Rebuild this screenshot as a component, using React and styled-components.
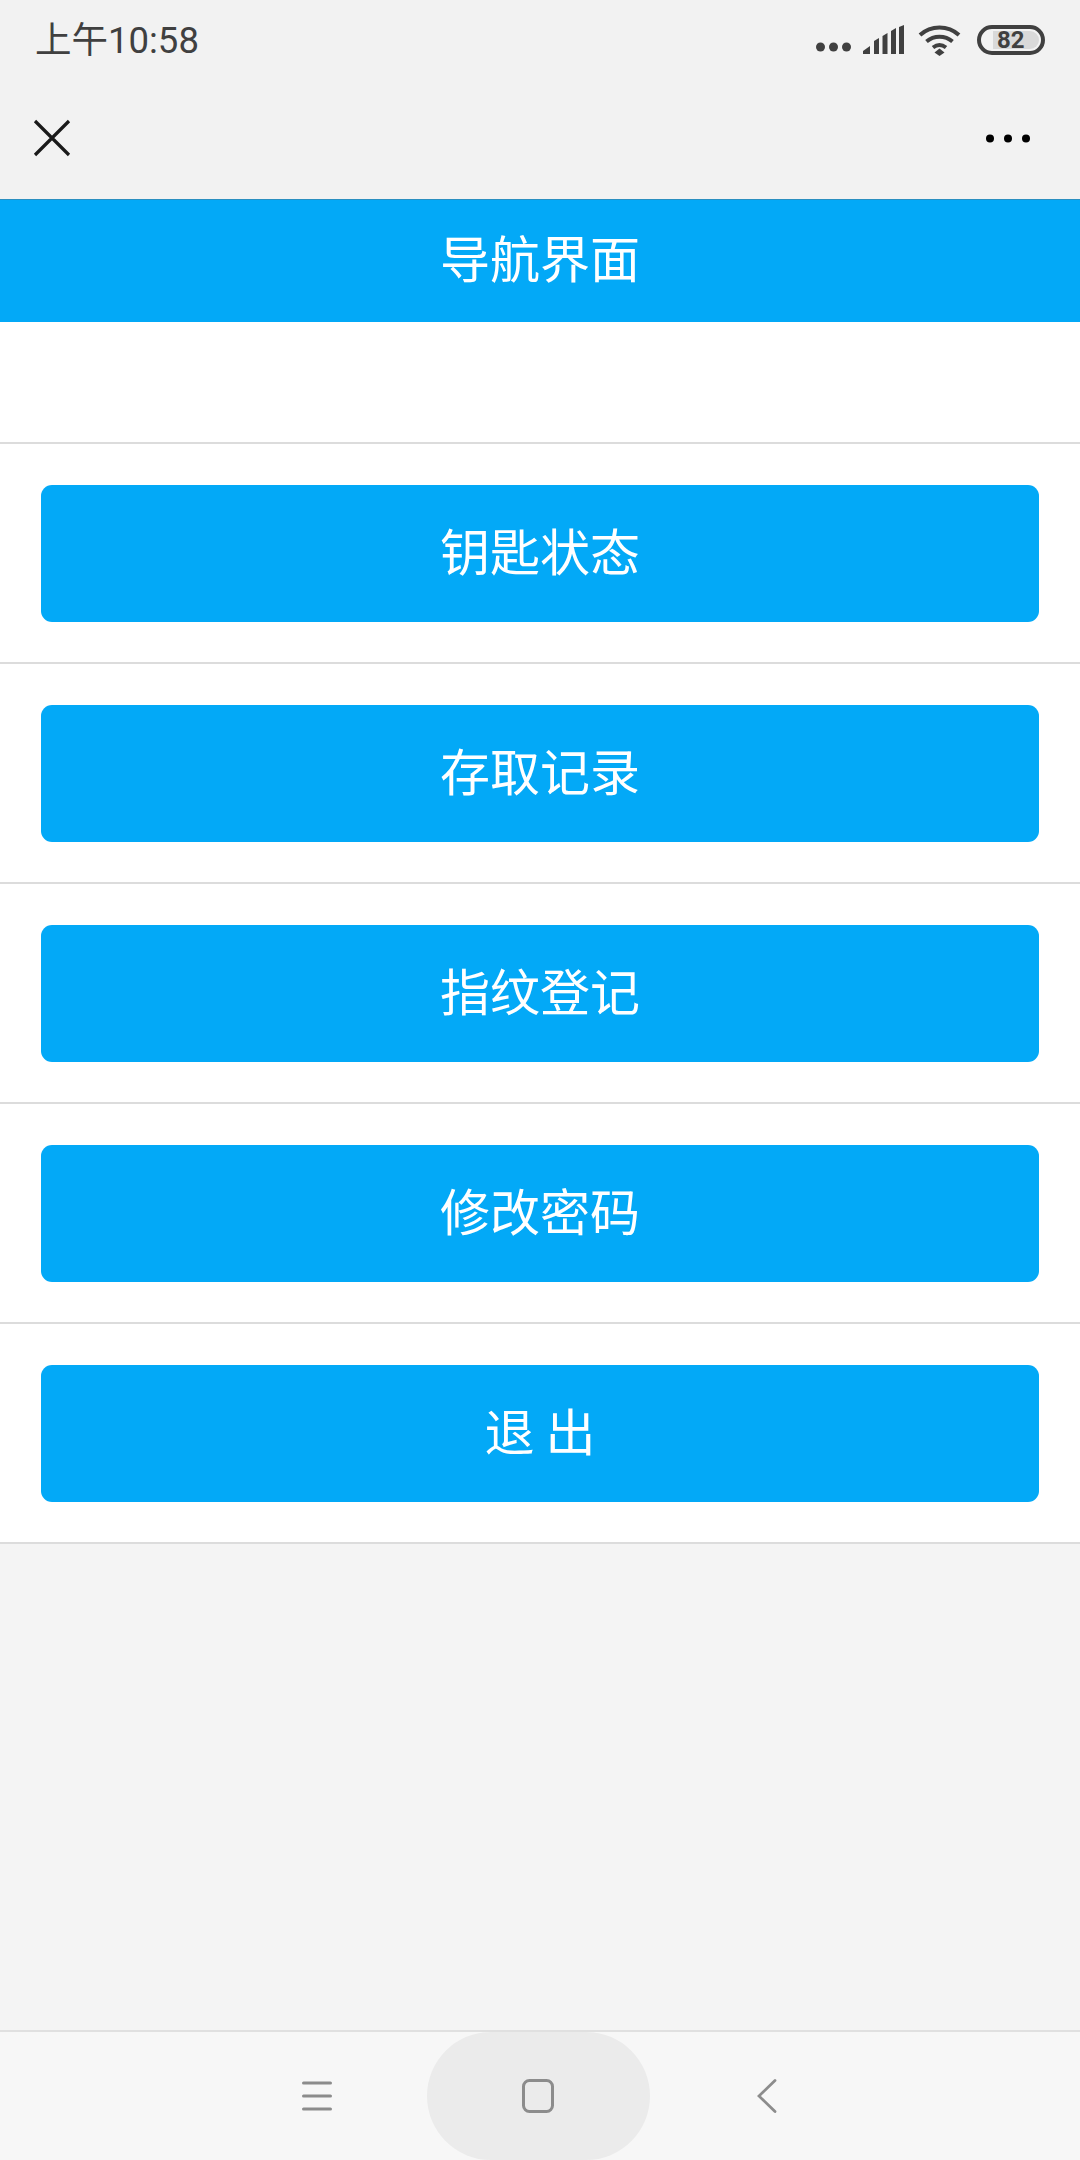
import styled, { createGlobalStyle } from "styled-components";

const Global = createGlobalStyle`
    html, body {
        margin: 0;
        padding: 0;
        background: #f4f4f4;
    }
    * {
        box-sizing: border-box;
    }
`;

const menus = ["钥匙状态", "存取记录", "指纹登记", "修改密码", "退 出"];

export default function App() {
    return (
        <Page>
            <Global />
            <StatusBar>
                <Time>上午10:58</Time>
                <StatusIcons>
                    <DotsIcon width="36" height="12" viewBox="0 0 36 12">
                        <circle cx="4.500" cy="6" r="4.500" fill="#404040" />
                        <circle cx="17.500" cy="6" r="4.500" fill="#404040" />
                        <circle cx="30.500" cy="6" r="4.500" fill="#404040" />
                    </DotsIcon>
                    <SignalIcon width="41" height="30" viewBox="0 0 41 30">
                        <path d="M0 29v-3l7-5v8z" fill="#404040" />
                        <path d="M11 29V16l5-3v16z" fill="#404040" />
                        <path d="M19.500 29V11l5-3v21z" fill="#404040" />
                        <path d="M28 29V6l5-3v26z" fill="#404040" />
                        <path d="M36 29V2l5-2v29z" fill="#404040" />
                    </SignalIcon>
                    <svg width="43" height="31" viewBox="0 0 43 31" fill="none" stroke="#404040" strokeWidth="4">
                        <path d="M2 10C13 0 30 0 41 10" />
                        <path d="M8.500 16.500C16 10 27 10 34.500 16.500" />
                        <path d="M15 22.500C19 19.500 24 19.500 28 22.500" />
                        <path d="M21.500 23.500l5 4-5 3.500-5-3.500z" fill="#404040" stroke="none" />
                    </svg>
                    <Battery>
                        <BatteryLevel>82</BatteryLevel>
                    </Battery>
                </StatusIcons>
            </StatusBar>
            <NavBar>
                <svg width="38" height="38" viewBox="0 0 38 38" stroke="#1a1a1a" strokeWidth="3.200">
                    <path d="M2 2l34 34M36 2L2 36" />
                </svg>
                <svg width="45" height="9" viewBox="0 0 45 9" fill="#000">
                    <circle cx="4" cy="4.500" r="4" />
                    <circle cx="22" cy="4.500" r="4" />
                    <circle cx="40" cy="4.500" r="4" />
                </svg>
            </NavBar>
            <Header>导航界面</Header>
            <Spacer />
            {menus.map((texto) => (
                <Row key={texto}>
                    <MenuButton>{texto}</MenuButton>
                </Row>
            ))}
            <Empty />
            <BottomBar>
                <MenuIcon width="30" height="30" viewBox="0 0 30 30" stroke="#8c8c8c" strokeWidth="3" strokeLinecap="round">
                    <path d="M1.500 2h27M1.500 15h27M1.500 28h27" />
                </MenuIcon>
                <HomePill>
                    <svg width="32" height="34" viewBox="0 0 32 34" fill="none" stroke="#8c8c8c" strokeWidth="3">
                        <rect x="1.500" y="1.500" width="29" height="31" rx="6" />
                    </svg>
                </HomePill>
                <BackIcon width="20" height="34" viewBox="0 0 20 34" fill="none" stroke="#8c8c8c" strokeWidth="2.800" strokeLinecap="round">
                    <path d="M18 1.500L2 17l16 15.500" />
                </BackIcon>
            </BottomBar>
        </Page>
    );
}

const Page = styled.div`
    width: 1080px;
    height: 2160px;
    display: flex;
    flex-direction: column;
    overflow: hidden;
    font-family: "Noto Sans CJK SC", "Noto Sans", sans-serif;
`;

const StatusBar = styled.div`
    height: 80px;
    background-color: #f2f2f2;
    display: flex;
    justify-content: space-between;
    align-items: center;
    padding: 0 35px 0 35px;
`;

const Time = styled.span`
    font-family: Roboto, "Noto Sans CJK SC", sans-serif;
    font-size: 36.500px;
    color: #404040;
    padding-bottom: 6px;
`;

const StatusIcons = styled.div`
    display: flex;
    align-items: center;
    gap: 16px;
`;

const DotsIcon = styled.svg`
    margin-top: 14px;
    margin-right: -5px;
`;

const SignalIcon = styled.svg`
    margin-right: -2px;
`;

const Battery = styled.div`
    width: 68px;
    height: 30px;
    border: 4px solid #404040;
    border-radius: 15px;
    display: flex;
    justify-content: flex-end;
    align-items: center;
    padding: 2px;
`;

const BatteryLevel = styled.div`
    width: 46px;
    height: 18px;
    background-color: #d9d9d9;
    border-radius: 0 9px 9px 0;
    font-family: Roboto, sans-serif;
    font-size: 24px;
    font-weight: 700;
    line-height: 18px;
    padding-left: 4px;
    color: #404040;
`;

const NavBar = styled.div`
    height: 119px;
    background-color: #f2f2f2;
    display: flex;
    justify-content: space-between;
    align-items: center;
    padding: 0 49px 3px 33px;
`;

const Header = styled.div`
    height: 123px;
    background-color: #03a9f7;
    border-top: 1px solid #2a8fc0;
    display: flex;
    justify-content: center;
    align-items: center;
    color: #fff;
    font-size: 50px;
    padding-bottom: 10px;
`;

const Spacer = styled.div`
    height: 122px;
    background-color: #fff;
    border-bottom: 2px solid #dcdcdc;
`;

const Row = styled.div`
    height: 220px;
    background-color: #fff;
    border-bottom: 2px solid #dcdcdc;
    padding: 41px 41px 40px;
`;

const MenuButton = styled.div`
    height: 137px;
    background-color: #03a9f7;
    border-radius: 11px;
    display: flex;
    justify-content: center;
    align-items: center;
    color: #fff;
    font-size: 50px;
    padding-bottom: 10px;
    white-space: pre;
`;

const Empty = styled.div`
    flex: 1;
    background-color: #f4f4f4;
`;

const BottomBar = styled.div`
    height: 130px;
    background-color: #f7f7f7;
    border-top: 2px solid #e0e0e0;
    display: flex;
    justify-content: center;
    align-items: stretch;
    padding-right: 2px;
`;

const MenuIcon = styled.svg`
    align-self: center;
    margin-right: 95px;
`;

const HomePill = styled.div`
    width: 223px;
    background-color: #ebebeb;
    border-radius: 64px;
    display: flex;
    justify-content: center;
    align-items: center;
`;

const BackIcon = styled.svg`
    align-self: center;
    margin-left: 107px;
`;
